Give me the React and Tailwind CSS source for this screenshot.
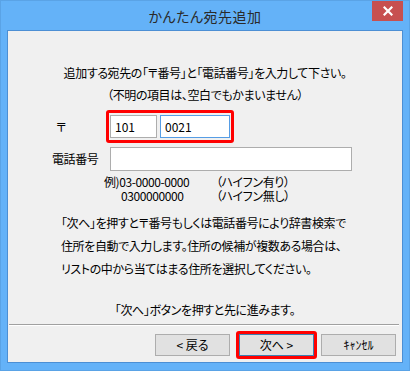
import React from 'react'

const FONT = "font-['Meiryo_UI','Noto_Sans_CJK_JP',sans-serif] [font-feature-settings:'palt']"

function Btn({ children, focused }) {
  return (
    <button
      className={`w-[75px] h-[22px] text-[12px] leading-none bg-[#e1e1e1] border ${
        focused ? 'border-[#3c7fb1]' : 'border-[#adadad]'
      } text-black`}
    >
      {children}
    </button>
  )
}

export default function App() {
  return (
    <div className={`w-[410px] h-[371px] bg-[#64b2f8] border border-[#5aa3e6] flex flex-col text-black ${FONT}`}>
      {/* タイトルバー */}
      <div className="relative h-[29px] shrink-0 flex items-center justify-center">
        <span className="text-[14px] text-[#2a2a2a] tracking-[0.5px] mt-[1px]">かんたん宛先追加</span>
        <div className="absolute right-[6px] top-0 w-[31px] h-[20px] bg-[#c75050] flex items-center justify-center">
          <svg width="10" height="10" viewBox="0 0 10 10">
            <path d="M1.5 1.5 L8.5 8.5 M8.5 1.5 L1.5 8.5" stroke="#fff" strokeWidth="2.2" strokeLinecap="square" />
          </svg>
        </div>
      </div>

      {/* クライアント領域 */}
      <div className="mx-[6px] h-[333px] bg-[#f0f0f0] border border-[#4c8fd4] flex flex-col text-[12px] tracking-[-0.4px]">
        <p className="pt-[34px] leading-[16px] text-center">
          追加する宛先の「〒番号」と「電話番号」を入力して下さい。
        </p>
        <p className="mt-[6px] leading-[16px] text-center">（不明の項目は、空白でもかまいません）</p>

        <div className="mt-[7px] flex items-center pl-[48px]">
          <span className="w-[50px] leading-[16px]">〒</span>
          <div className="flex gap-[3px] border-[3px] border-[#ff0000] rounded-[3px] px-[1px] py-[2px]">
            <div className="w-[47px] h-[23px] bg-white border border-[#adadad] flex items-center px-[4px] text-[12px] tracking-normal">101</div>
            <div className="w-[70px] h-[23px] bg-white border border-[#569de5] flex items-center px-[4px] text-[12px] tracking-normal">0021</div>
          </div>
        </div>

        <div className="mt-[4px] flex items-center pl-[44px]">
          <span className="w-[58px] leading-[16px]">電話番号</span>
          <div className="w-[242px] h-[24px] bg-white border border-[#adadad]" />
        </div>

        <div className="mt-[4px] pl-[96px] leading-[14px]">
          <div className="flex">
            <span className="w-[112px]">例)03-0000-0000</span>
            <span>（ハイフン有り）</span>
          </div>
          <div className="flex">
            <span className="w-[112px] pl-[17px]">0300000000</span>
            <span>（ハイフン無し）</span>
          </div>
        </div>

        <div className="mt-[8px] pl-[53px] leading-[23px]">
          <p>「次へ」を押すと〒番号もしくは電話番号により辞書検索で</p>
          <p>住所を自動で入力します。住所の候補が複数ある場合は、</p>
          <p>リストの中から当てはまる住所を選択してください。</p>
        </div>

        <p className="mt-[22px] leading-[16px] text-center">「次へ」ボタンを押すと先に進みます。</p>

        <div className="mt-[6px] ml-[1px] mr-[3px] border-t border-[#a0a0a0] border-b border-b-white" />

        <div className="mt-[5px] flex items-center justify-end pr-[6px] tracking-normal">
          <Btn>&lt; 戻る</Btn>
          <div className="ml-[6px] border-[3px] border-[#ff0000] rounded-[3px]">
            <Btn focused>次へ &gt;</Btn>
          </div>
          <div className="ml-[4px]">
            <Btn>ｷｬﾝｾﾙ</Btn>
          </div>
        </div>
      </div>
    </div>
  )
}
